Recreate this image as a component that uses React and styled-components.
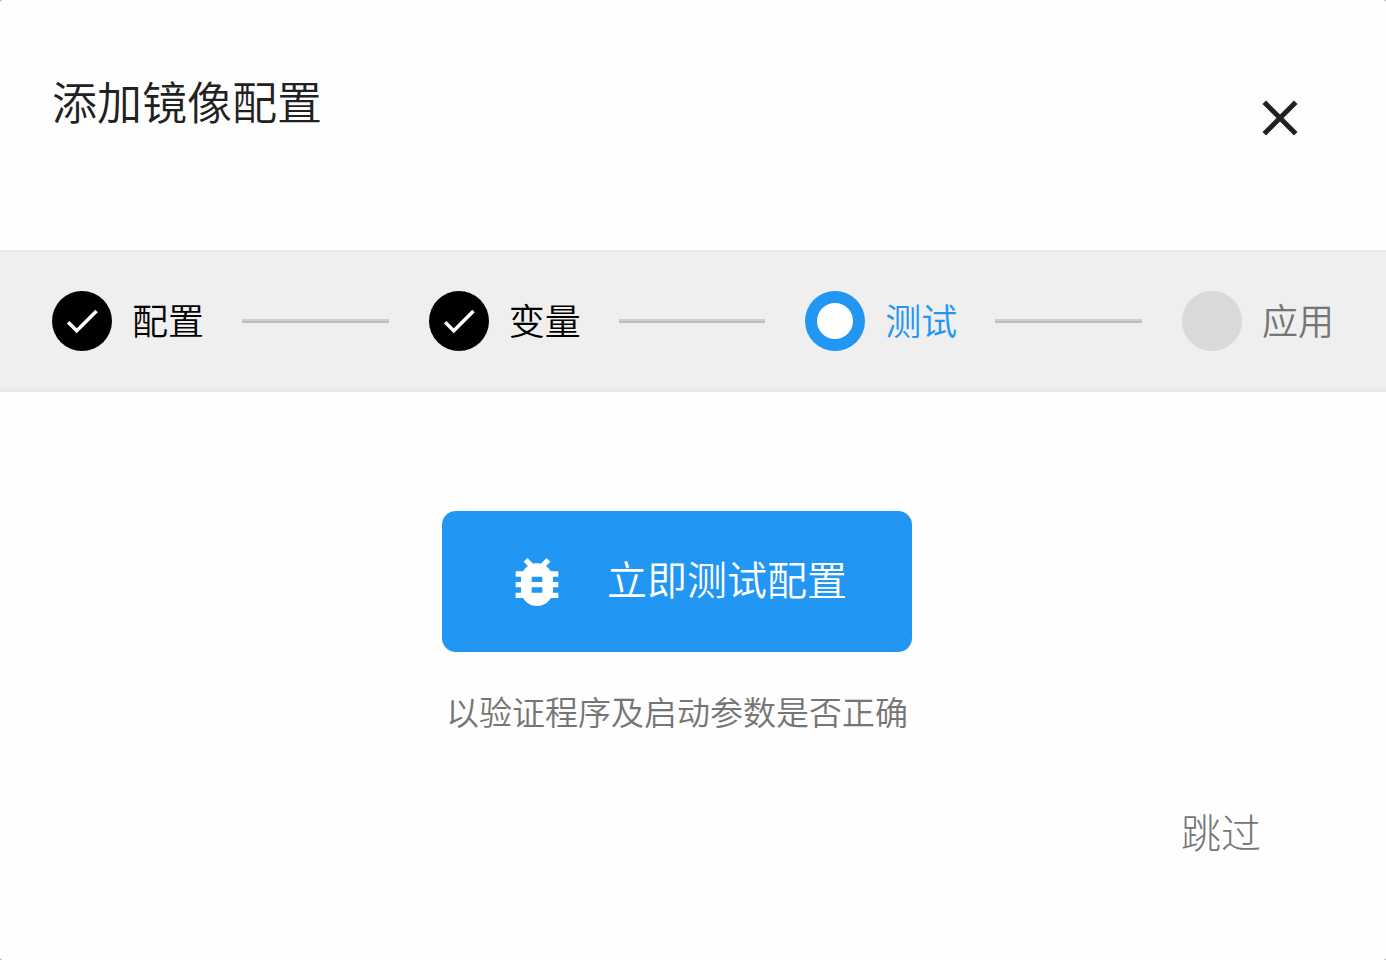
import React, { Component } from 'react';
import styled, { createGlobalStyle } from 'styled-components';
import { MdBugReport, MdCheck, MdClose } from 'react-icons/md';

const GlobalStyle = createGlobalStyle`
  * {
    box-sizing: border-box;
  }
  body {
    margin: 0;
    background: #aaaaaa;
    font-family: "Noto Sans CJK SC", sans-serif;
    font-weight: 350;
  }
  button {
    padding: 0;
    border: none;
    background: none;
    font: inherit;
    cursor: pointer;
  }
  svg {
    display: block;
  }
`

const Dialog = styled.main`
  display: flex;
  flex-direction: column;
  min-height: 100vh;
  border-radius: 3px;
  background: #fefefe;
`

const Header = styled.header`
  display: flex;
  justify-content: space-between;
  align-items: flex-start;
  padding: 71px 76px 102px 52px;
`

const Title = styled.h1`
  margin: 0;
  color: #212121;
  font-size: 45px;
  font-weight: 350;
  line-height: 60px;
`

const CloseButton = styled.button`
  margin-top: 17px;
  color: #212121;
  font-size: 60px;
`

const Stepper = styled.ol`
  display: flex;
  align-items: center;
  margin: 0;
  padding: 39px 52px 37px;
  border-top: 2px solid #e8e8e8;
  border-bottom: 4px solid #eaeaea;
  background: #efefef;
  list-style: none;
`

const StepItem = styled.li`
  display: flex;
  align-items: center;
  flex: ${props => (props.$last ? 'none' : '1 1 auto')};
`

const stepColors = {
  done: { mark: '#000000', label: '#000000' },
  active: { mark: '#2196f3', label: '#2196f3' },
  todo: { mark: '#d9d9d9', label: '#757575' },
}

const StepMark = styled.span`
  display: flex;
  align-items: center;
  justify-content: center;
  flex: none;
  width: 60px;
  height: 60px;
  margin-right: 20px;
  border-radius: 50%;
  background: ${props => stepColors[props.$status].mark};
  color: #ffffff;
  font-size: 42px;
`

const StepDot = styled.span`
  width: 36px;
  height: 36px;
  border-radius: 50%;
  background: #ffffff;
`

const StepLabel = styled.span`
  flex: none;
  padding-bottom: 4px;
  color: ${props => stepColors[props.$status].label};
  font-size: 36px;
  line-height: 56px;
`

const StepLine = styled.span`
  flex: 1;
  height: 4px;
  margin: 0 40px 0 38px;
  border-top: 2px solid #cfcfcf;
  background: #bdbdbd;
`

const Content = styled.section`
  display: flex;
  flex-direction: column;
  align-items: center;
  padding: 119px 32px 0 0;
`

const TestButton = styled.button`
  && {
    display: flex;
    align-items: center;
    gap: 38px;
    height: 141px;
    padding: 0 65px 0 63px;
    border-radius: 14px;
    background: #2196f3;
    color: #ffffff;
    font-size: 40px;
    line-height: 60px;
  }
  svg {
    font-size: 64px;
  }
`

const TestLabel = styled.span`
  padding-bottom: 8px;
`

const Hint = styled.p`
  margin: 34px 0 0;
  color: #757575;
  font-size: 33px;
  line-height: 50px;
`

const Footer = styled.footer`
  display: flex;
  justify-content: flex-end;
  padding: 65px 125px 90px;
`

const SkipButton = styled.button`
  && {
    color: #757575;
    font-size: 40px;
    font-weight: 300;
    line-height: 60px;
  }
`

const steps = [
  { id: 'config', label: '配置', status: 'done' },
  { id: 'env', label: '变量', status: 'done' },
  { id: 'test', label: '测试', status: 'active' },
  { id: 'apply', label: '应用', status: 'todo' },
]

class Step extends Component {
  render() {
    const { label, status, last } = this.props;
    return (
      <StepItem $last={last} aria-current={status === 'active' ? 'step' : undefined}>
        <StepMark $status={status}>
          {status === 'done' && <MdCheck />}
          {status === 'active' && <StepDot />}
        </StepMark>
        <StepLabel $status={status}>{label}</StepLabel>
        {!last && <StepLine />}
      </StepItem>
    );
  }
}

export default class App extends Component {
  render() {
    return (
      <>
        <GlobalStyle />
        <Dialog>
          <Header>
            <Title>添加镜像配置</Title>
            <CloseButton type="button" aria-label="关闭">
              <MdClose />
            </CloseButton>
          </Header>
          <Stepper>
            {steps.map((step, index) => (
              <Step
                key={step.id}
                label={step.label}
                status={step.status}
                last={index === steps.length - 1}
              />
            ))}
          </Stepper>
          <Content>
            <TestButton type="button">
              <MdBugReport />
              <TestLabel>立即测试配置</TestLabel>
            </TestButton>
            <Hint>以验证程序及启动参数是否正确</Hint>
          </Content>
          <Footer>
            <SkipButton type="button">跳过</SkipButton>
          </Footer>
        </Dialog>
      </>
    );
  }
}
